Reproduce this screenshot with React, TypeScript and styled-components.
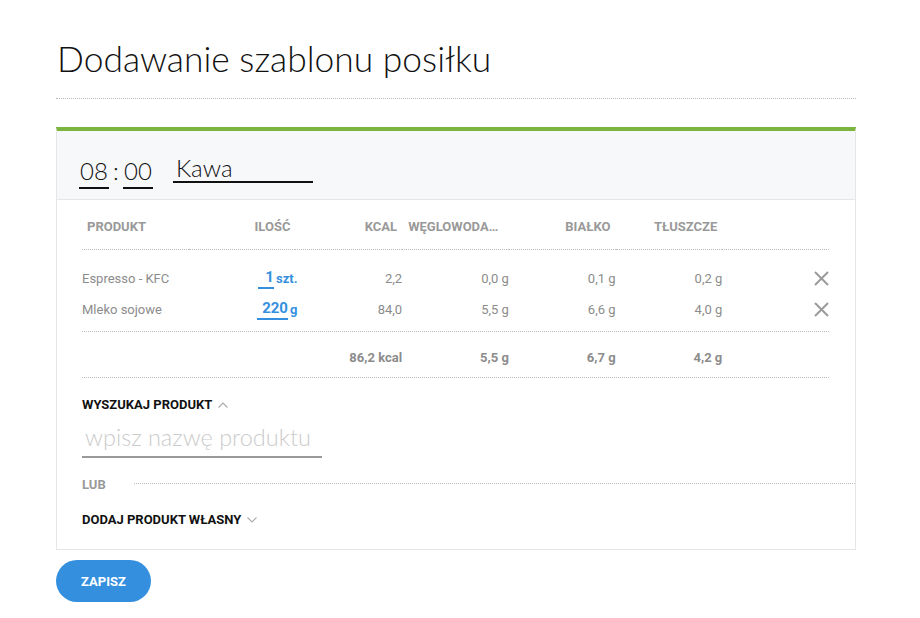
import styled, { createGlobalStyle } from "styled-components";

const GlobalStyle = createGlobalStyle`
  body {
    margin: 0;
    background: #fff;
    font-family: Roboto, "Liberation Sans", sans-serif;
  }
  input {
    font: inherit;
    outline: none;
  }
`;

const Page = styled.div`
  width: 800px;
  padding: 37px 0 16px 56px;
`;

const Title = styled.h1`
  margin: 0;
  font-family: Lato, "Liberation Sans", sans-serif;
  font-weight: 300;
  font-size: 35.4px;
  line-height: 43px;
  color: #111;
  padding: 0 0 0 1px;
`;

const TitleRule = styled.div`
  margin-top: 18px;
  border-bottom: 1px dotted #b9b9b9;
`;

const Card = styled.div`
  box-sizing: border-box;
  width: 800px;
  margin-top: 28px;
  border: 1px solid #e6e6e6;
  border-top: 4px solid #7cb53d;
`;

const CardHead = styled.div`
  display: flex;
  align-items: flex-end;
  background: #f7f8fa;
  padding: 24px 22px 10px;
  border-bottom: 1px solid #e6e6e6;
`;

const TimeInput = styled.input`
  box-sizing: content-box;
  width: 30px;
  height: 28px;
  padding: 0 0 2px;
  border: none;
  border-bottom: 2px solid #111;
  background: transparent;
  font-family: Lato, "Liberation Sans", sans-serif;
  font-weight: 300;
  font-size: 24px;
  line-height: 28px;
  color: #111;
  text-align: center;
`;

const Colon = styled.span`
  width: 14px;
  text-align: center;
  font-family: Lato, "Liberation Sans", sans-serif;
  font-weight: 300;
  font-size: 24px;
  line-height: 28px;
  padding-bottom: 4px;
  color: #111;
`;

const NameInput = styled.input`
  box-sizing: content-box;
  width: 137px;
  height: 26px;
  margin: 0 0 6px 20px;
  padding: 0 0 0 3px;
  border: none;
  border-bottom: 2px solid #111;
  background: transparent;
  font-family: Lato, "Liberation Sans", sans-serif;
  font-weight: 300;
  font-size: 24px;
  line-height: 26px;
  color: #111;
`;

const Table = styled.div`
  display: grid;
  grid-template-columns: repeat(7, 1fr);
  width: 747px;
  margin-left: 25px;
`;

const HeadCell = styled.div<{ $left?: boolean; $clip?: boolean }>`
  padding: 20px 5px 15px 5px;
  border-bottom: 1px dotted #bdbdbd;
  font-size: 13px;
  line-height: 14px;
  font-weight: 700;
  color: #999;
  text-align: ${(p) => (p.$left || p.$clip ? "left" : "right")};
  white-space: nowrap;
  overflow: hidden;
  text-overflow: ellipsis;
  ${(p) => p.$clip && "padding-left: 6px; padding-right: 7px;"}
`;

const Body = styled.div`
  grid-column: 1 / -1;
  display: grid;
  grid-template-columns: repeat(7, 1fr);
  padding: 13px 0 6px;
  border-bottom: 1px dotted #bdbdbd;
`;

const Cell = styled.div<{ $left?: boolean }>`
  display: flex;
  align-items: center;
  justify-content: ${(p) => (p.$left ? "flex-start" : "flex-end")};
  height: 31px;
  font-size: 13px;
  color: #8c8c8c;
  white-space: nowrap;
`;

const QtyInput = styled.input`
  box-sizing: content-box;
  padding: 0 0 1px;
  height: 18px;
  border: none;
  border-bottom: 2px solid #3490df;
  background: transparent;
  font-size: 15px;
  font-weight: 700;
  color: #3490df;
  text-align: right;
`;

const Unit = styled.span`
  margin: 0 -2px 0 2px;
  font-size: 13px;
  font-weight: 700;
  color: #3490df;
`;

const Remove = styled.button`
  display: flex;
  padding: 0;
  border: none;
  background: none;
  cursor: pointer;
`;

const Totals = styled.div`
  grid-column: 1 / -1;
  display: grid;
  grid-template-columns: repeat(7, 1fr);
  border-bottom: 1px dotted #bdbdbd;
  padding: 19px 0 12px;
`;

const TotalCell = styled.div`
  font-size: 13px;
  line-height: 14px;
  font-weight: 700;
  color: #8c8c8c;
  text-align: right;
  white-space: nowrap;
`;

const Section = styled.div`
  padding: 20px 0 22px 25px;
`;

const Toggle = styled.div`
  display: flex;
  align-items: center;
  gap: 6px;
  font-size: 13px;
  line-height: 14px;
  font-weight: 700;
  color: #111;
`;

const SearchInput = styled.input`
  box-sizing: border-box;
  display: block;
  width: 240px;
  height: 37px;
  margin-top: 9px;
  padding: 0 0 4px 3px;
  border: none;
  border-bottom: 2px solid #999;
  font-family: Lato, "Liberation Sans", sans-serif;
  font-weight: 300;
  font-size: 23.5px;
  color: #333;
  &::placeholder {
    color: #cbcbcb;
  }
`;

const OrRow = styled.div`
  display: flex;
  align-items: center;
  margin: 20px 0 21px;
`;

const OrLabel = styled.span`
  width: 52px;
  font-size: 13px;
  line-height: 14px;
  font-weight: 700;
  color: #999;
`;

const OrLine = styled.div`
  flex: 1;
  margin-top: -3px;
  border-top: 1px dotted #bdbdbd;
`;

const SaveButton = styled.button`
  display: block;
  width: 95px;
  height: 42px;
  margin-top: 10px;
  border: none;
  border-radius: 21px;
  background: #3490df;
  color: #fff;
  font-family: Roboto, "Liberation Sans", sans-serif;
  font-size: 13px;
  font-weight: 700;
  cursor: pointer;
`;

const Chevron = ({ up }: { up?: boolean }) => (
  <svg width="10" height="6" viewBox="0 0 10 6" fill="none" stroke="#aaa" strokeWidth="1.1">
    {up ? <polyline points="0.5,5.5 5,1 9.5,5.5" /> : <polyline points="0.5,0.5 5,5 9.5,0.5" />}
  </svg>
);

const Cross = () => (
  <svg width="15" height="15" viewBox="0 0 15 15" stroke="#9a9a9a" strokeWidth="2">
    <line x1="1" y1="1" x2="14" y2="14" />
    <line x1="14" y1="1" x2="1" y2="14" />
  </svg>
);

const items = [
  { name: "Espresso - KFC", qty: "1", w: 16, unit: "szt.", kcal: "2,2", c: "0,0 g", p: "0,1 g", f: "0,2 g" },
  { name: "Mleko sojowe", qty: "220", w: 31, unit: "g", kcal: "84,0", c: "5,5 g", p: "6,6 g", f: "4,0 g" },
];

const heads = ["PRODUKT", "ILOŚĆ", "KCAL", "WĘGLOWODANY", "BIAŁKO", "TŁUSZCZE", ""];

export default function App() {
  return (
    <>
      <GlobalStyle />
      <Page>
        <Title>Dodawanie szablonu posiłku</Title>
        <TitleRule />
        <Card>
          <CardHead>
            <TimeInput defaultValue="08" />
            <Colon>:</Colon>
            <TimeInput defaultValue="00" />
            <NameInput defaultValue="Kawa" />
          </CardHead>
          <Table>
            {heads.map((h, i) => (
              <HeadCell key={i} $left={i === 0} $clip={i === 3}>
                {h}
              </HeadCell>
            ))}
            <Body>
              {items.map((it) => [
                <Cell $left key={it.name + "n"}>{it.name}</Cell>,
                <Cell key={it.name + "q"}>
                  <QtyInput defaultValue={it.qty} style={{ width: it.w }} />
                  <Unit>{it.unit}</Unit>
                </Cell>,
                <Cell key={it.name + "k"}>{it.kcal}</Cell>,
                <Cell key={it.name + "c"}>{it.c}</Cell>,
                <Cell key={it.name + "p"}>{it.p}</Cell>,
                <Cell key={it.name + "f"}>{it.f}</Cell>,
                <Cell key={it.name + "x"}>
                  <Remove aria-label="usuń">
                    <Cross />
                  </Remove>
                </Cell>,
              ])}
            </Body>
            <Totals>
              <TotalCell />
              <TotalCell />
              <TotalCell>86,2 kcal</TotalCell>
              <TotalCell>5,5 g</TotalCell>
              <TotalCell>6,7 g</TotalCell>
              <TotalCell>4,2 g</TotalCell>
              <TotalCell />
            </Totals>
          </Table>
          <Section>
            <Toggle>
              WYSZUKAJ PRODUKT <Chevron up />
            </Toggle>
            <SearchInput placeholder="wpisz nazwę produktu" />
            <OrRow>
              <OrLabel>LUB</OrLabel>
              <OrLine />
            </OrRow>
            <Toggle>
              DODAJ PRODUKT WŁASNY <Chevron />
            </Toggle>
          </Section>
        </Card>
        <SaveButton>ZAPISZ</SaveButton>
      </Page>
    </>
  );
}
